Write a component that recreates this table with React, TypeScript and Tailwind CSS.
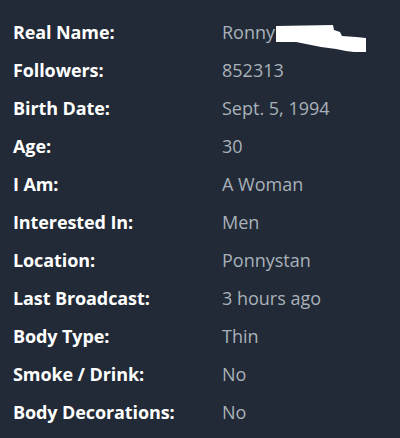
import React from "react";

const rows: [string, string][] = [
  ["Real Name:", "Ronny"],
  ["Followers:", "852313"],
  ["Birth Date:", "Sept. 5, 1994"],
  ["Age:", "30"],
  ["I Am:", "A Woman"],
  ["Interested In:", "Men"],
  ["Location:", "Ponnystan"],
  ["Last Broadcast:", "3 hours ago"],
  ["Body Type:", "Thin"],
  ["Smoke / Drink:", "No"],
  ["Body Decorations:", "No"],
];

export default function App() {
  return (
    <div
      className="w-[400px] h-[438px] bg-[#212a36] pt-[13px] pl-[13px] overflow-hidden"
      style={{ fontFamily: '"Open Sans", "Noto Sans", sans-serif' }}
    >
      {rows.map(([k, v]) => (
        <div key={k} className="relative flex h-[38px] items-center">
          <div className="w-[209px] text-[18px] leading-[24px] font-bold text-white tracking-[-0.1px]">{k}</div>
          <div className="text-[18px] leading-[24px] text-[#a9b1ba]">{v}</div>
          {k === "Real Name:" && (
            <svg
              className="absolute left-[263px] top-[12px]"
              width="92"
              height="30"
              viewBox="0 0 92 30"
            >
              <path
                d="M0 1 L57 0 L58 5 L64 7 L66 11 L80 12 L90 13 L90 27 L78 27 L70 26 L60 24 L45 22 L35 20 L20 17 L0 17 Z"
                fill="#ffffff"
              />
            </svg>
          )}
        </div>
      ))}
    </div>
  );
}
